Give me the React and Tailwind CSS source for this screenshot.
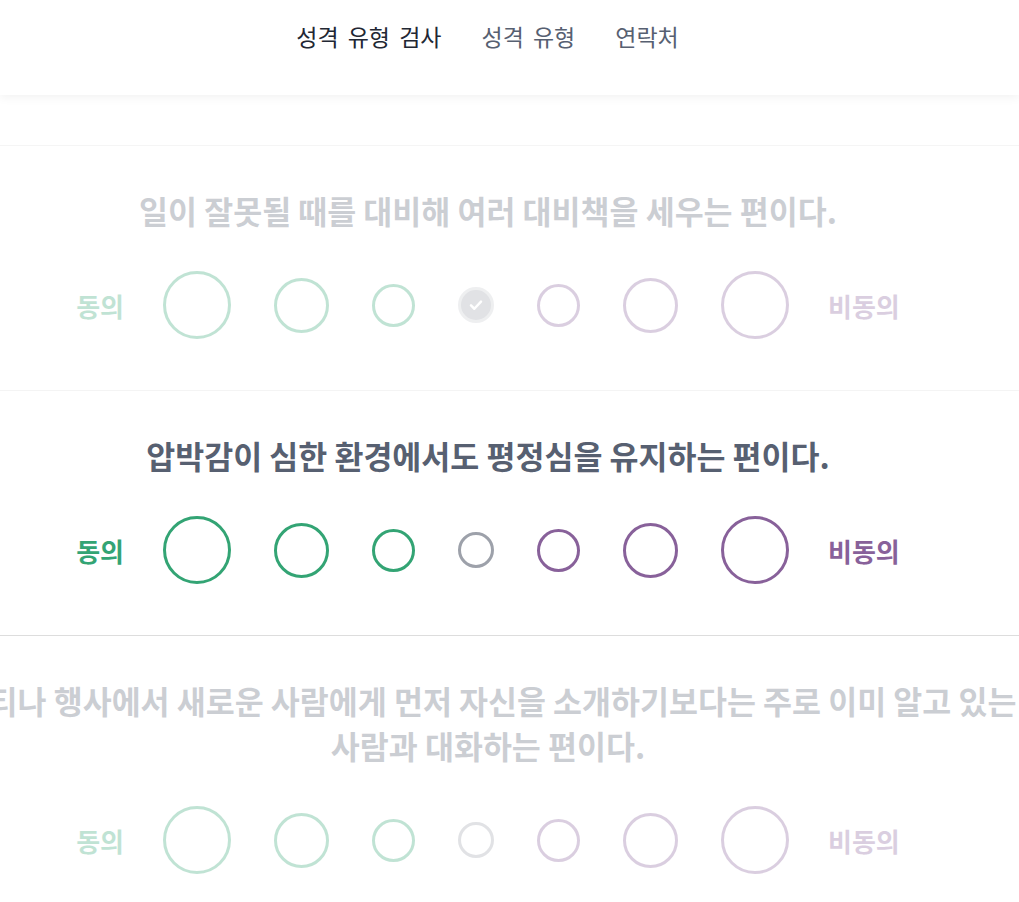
import React, { useState } from 'react';

const circleSizes = [
  'size-[68px]',
  'size-[55px]',
  'size-[43px]',
  'size-[36px]',
  'size-[43px]',
  'size-[55px]',
  'size-[68px]'
];

const circleColors = [
  'border-[#33a474]',
  'border-[#33a474]',
  'border-[#33a474]',
  'border-[#9da1aa]',
  'border-[#88619a]',
  'border-[#88619a]',
  'border-[#88619a]'
];

const questions = [
  { id: 1, text: '일이 잘못될 때를 대비해 여러 대비책을 세우는 편이다.', answer: 3 },
  { id: 2, text: '압박감이 심한 환경에서도 평정심을 유지하는 편이다.', answer: null },
  {
    id: 3,
    text: '파티나 행사에서 새로운 사람에게 먼저 자신을 소개하기보다는 주로 이미 알고 있는 사람과 대화하는 편이다.',
    answer: null
  }
];

const Check = () => (
  <svg className="w-5 h-5 text-white" fill="none" stroke="currentColor" viewBox="0 0 24 24">
    <path strokeLinecap="round" strokeLinejoin="round" strokeWidth="3" d="M6 12.5l4 4L18 8" />
  </svg>
);

const Question = ({ question, active, onAnswer }) => {
  return (
    <section
      className={`border-b border-[#dddddd] pt-[42px] pb-[51px] pr-[43px] flex flex-col items-center ${
        active ? '' : 'opacity-30'
      }`}
    >
      <h3 className="w-[1080px] shrink-0 text-center text-[31.5px] leading-[45px] font-bold text-[#576071] break-keep">
        {question.text}
      </h3>

      <div className="mt-[38px] flex items-center gap-[43px]">
        <span className="-mr-[4px] text-[26px] font-bold text-[#33a474]">동의</span>
        {circleSizes.map((size, i) => {
          const selected = question.answer === i;
          return (
            <button
              key={i}
              type="button"
              onClick={() => onAnswer(question.id, i)}
              className={`${size} rounded-full border-[3px] flex items-center justify-center ${
                selected ? 'bg-[#9da1aa] border-[#c9cbd1]' : `bg-white ${circleColors[i]}`
              }`}
            >
              {selected && <Check />}
            </button>
          );
        })}
        <span className="-ml-[4px] text-[26px] font-bold text-[#88619a]">비동의</span>
      </div>
    </section>
  );
};

const App = () => {
  const [items, setItems] = useState(questions);

  const handleAnswer = (id, value) => {
    setItems(items.map(q => (q.id === id ? { ...q, answer: value } : q)));
  };

  return (
    <div className="min-h-screen bg-white overflow-hidden font-['Noto_Sans_CJK_KR',sans-serif]">
      <header className="relative z-10 h-[95px] bg-white shadow-[0_2px_10px_rgba(0,0,0,0.06)]">
        <nav className="flex justify-center gap-10 pt-[20px] pr-[44px] text-[23px] leading-[32px] [word-spacing:4px]">
          <a href="#" className="text-[#222733]">성격 유형 검사</a>
          <a href="#" className="text-[#576071]">성격 유형</a>
          <a href="#" className="text-[#576071]">연락처</a>
        </nav>
      </header>

      <main>
        {/* tail of the previous question */}
        <div className="h-[51px] border-b border-[#dddddd] opacity-30" />
        {items.map(q => (
          <Question key={q.id} question={q} active={q.id === 2} onAnswer={handleAnswer} />
        ))}
      </main>
    </div>
  );
};

export default App;
